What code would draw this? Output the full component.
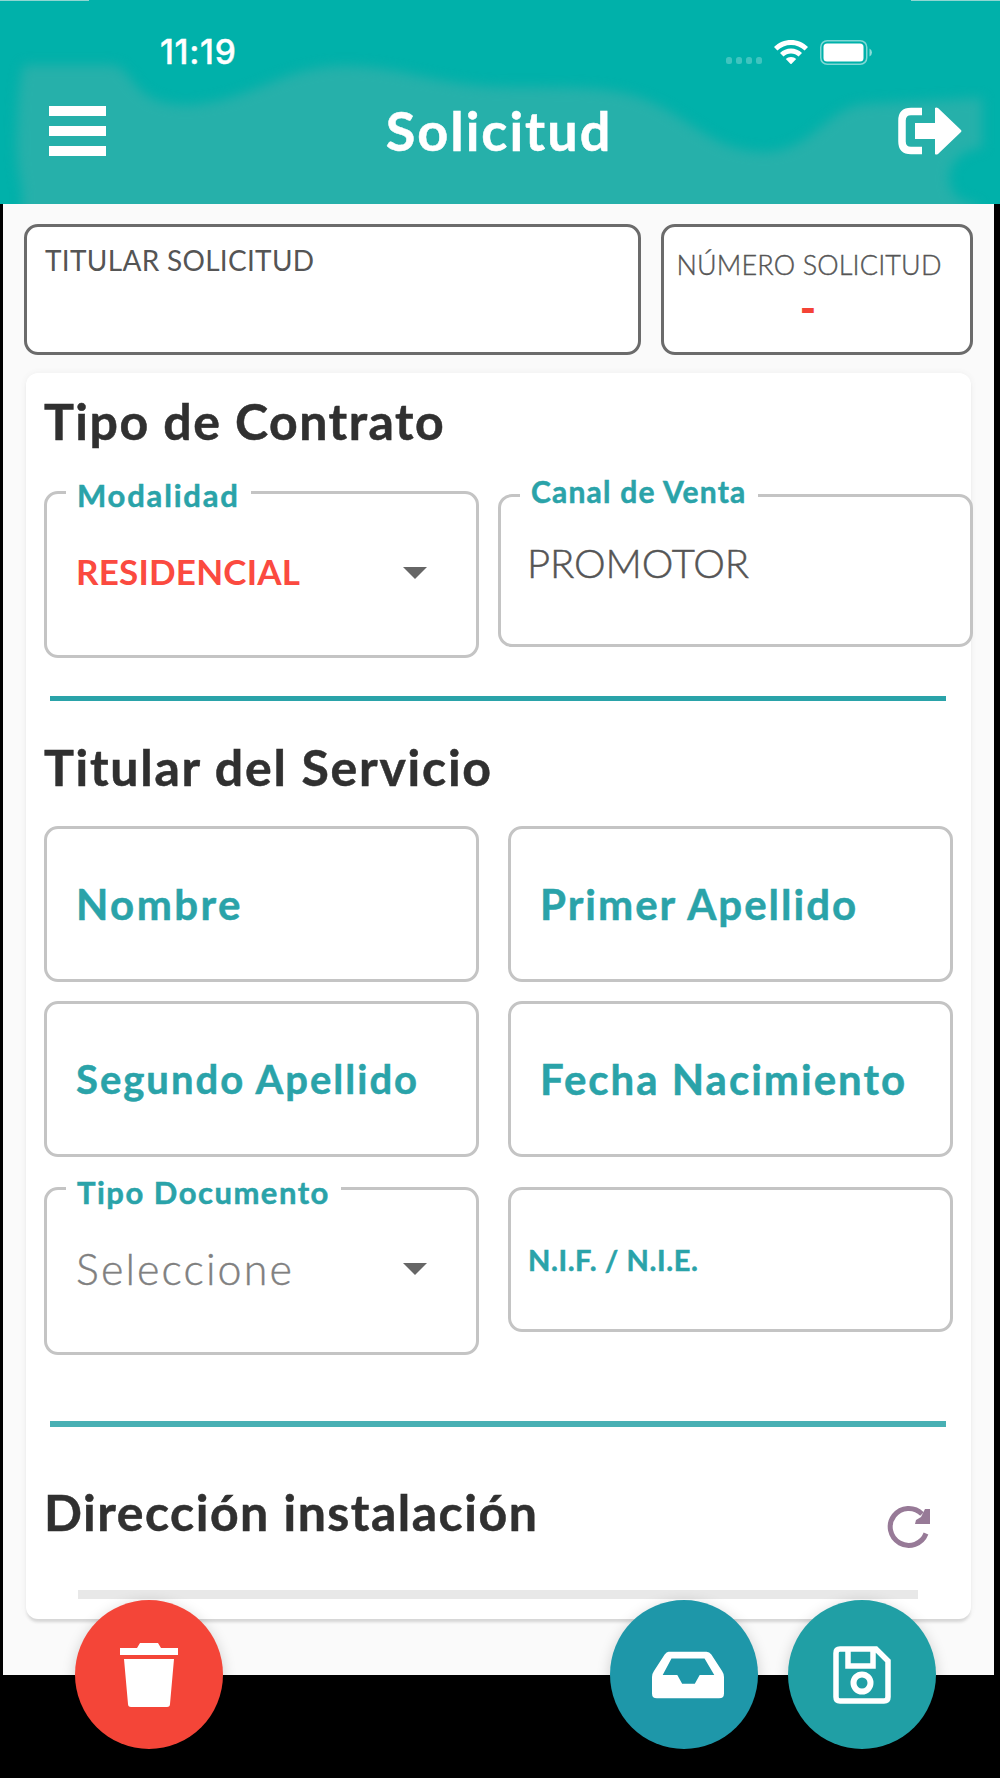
<div class="app">
  <header>
    <svg class="wash" viewBox="0 0 1000 204" aria-hidden="true">
      <path d="M22 240V190Q15 160 17 130Q18 80 24 65H112C135 68 130 104 185 105C250 103 280 66 345 66C400 66 430 84 500 87C570 88 600 86 635 96C690 114 710 152 765 152C815 150 825 108 865 104L982 98V148C942 150 936 202 978 204V240Z" />
    </svg>
    <div class="edges"><i></i><i></i></div>
    <div class="status">
      <span class="time">11:19</span>
      <div class="signals">
        <svg width="36" height="7" viewBox="0 0 36 7" class="dots"><rect width="6" height="7" rx="2.5" /><rect x="10" width="6" height="7" rx="2.5" /><rect x="20" width="6" height="7" rx="2.5" /><rect x="30" width="6" height="7" rx="2.5" /></svg>
        <svg width="34" height="24" viewBox="0 0 34 24" class="wifi"><path d="M17 0C23.500 0 29.400 2.500 34 7L30.600 10.600C27 7 22.200 5 17 5S7 7 3.400 10.600L0 7C4.600 2.500 10.500 0 17 0Z" /><path d="M17 8.500C21.200 8.500 25 10.100 28 13L24.500 16.500C22.500 14.600 19.900 13.500 17 13.500S11.500 14.600 9.500 16.500L6 13C9 10.100 12.800 8.500 17 8.500Z" /><path d="M17 17C19.200 17 20.900 17.800 22.200 19L17 24.400L11.800 19C13.100 17.800 14.800 17 17 17Z" /></svg>
        <svg width="53" height="25" viewBox="0 0 53 25"><rect x=".75" y=".75" width="46" height="23.500" rx="6.500" fill="none" stroke="#fff" stroke-opacity=".5" stroke-width="1.500" /><rect x="3.500" y="3.500" width="40" height="18" rx="3.500" fill="#fff" /><path d="M49.500 8.500Q52 10 52 12.500T49.500 16.500Z" fill="#fff" fill-opacity=".55" /></svg>
      </div>
    </div>
    <div class="bar">
      <svg class="burger" width="57" height="50" viewBox="0 0 57 50"><path d="M0 0H57V10H0ZM0 20H57V30H0ZM0 40H57V50H0Z" /></svg>
      <h1>Solicitud</h1>
      <svg width="64" height="48" viewBox="0 0 64 48"><path d="M24 4.500H13Q4 4.500 4 13.500V34.500Q4 43.500 13 43.500H24" fill="none" stroke="#fff" stroke-width="7.500" /><path d="M17 16H37V1Q38 0 40 1L63 23Q64 24 63 25L40 47Q38 48 37 47V32H17Z" fill="#fff" /></svg>
    </div>
  </header>

  <main>
    <div class="summary">
      <div class="box holder">TITULAR SOLICITUD</div>
      <div class="box request"><span>NÚMERO SOLICITUD</span><b>-</b></div>
    </div>

    <section class="card">
      <h2>Tipo de Contrato</h2>
      <div class="grid contract">
        <div class="field select"><span class="label mode">Modalidad</span><span class="value red">RESIDENCIAL</span><i class="caret low"></i></div>
        <div class="field channel"><span class="label">Canal de Venta</span><span class="value light">PROMOTOR</span></div>
      </div>
      <hr />
      <h2 class="owner">Titular del Servicio</h2>
      <div class="grid">
        <div class="field"><span class="hint name">Nombre</span></div>
        <div class="field"><span class="hint">Primer Apellido</span></div>
        <div class="field"><span class="hint surname">Segundo Apellido</span></div>
        <div class="field"><span class="hint">Fecha Nacimiento</span></div>
      </div>
      <div class="grid docs">
        <div class="field select doc"><span class="label type">Tipo Documento</span><span class="value grey">Seleccione</span><i class="caret"></i></div>
        <div class="field nif"><span class="hint tiny">N.I.F. / N.I.E.</span></div>
      </div>
      <hr class="pale" />
      <div class="address">
        <h2>Dirección instalación</h2>
        <svg class="reload" width="44" height="44" viewBox="0 0 44 44"><path d="M39 28.500A18.500 18.500 0 1 1 35 9" fill="none" stroke="#977a97" stroke-width="5" /><path d="M43 4V19H28L29 15L34 12L38 4Z" fill="#977a97" /></svg>
      </div>
      <div class="track"></div>
    </section>
  </main>

  <nav>
    <button class="fab danger" aria-label="Eliminar"><svg width="58" height="66" viewBox="0 0 58 66"><path d="M0 6H17L20 1H38L41 6H58V13H0ZM4 17H54L50 62Q50 65 47 65H11Q8 65 8 62Z" /></svg></button>
    <button class="fab blue" aria-label="Bandeja"><svg width="72" height="48" viewBox="0 0 74 48"><path fill-rule="evenodd" d="M17 0H56Q59 0 61 3L72 20Q74 23 74 26V43Q74 48 69 48H5Q0 48 0 43V26Q0 23 2 20L13 3Q15 0 17 0ZM20 7L11 24H26L31 33H44L49 24H64L54 7Z" /></svg></button>
    <button class="fab teal" aria-label="Guardar"><svg width="58" height="58" viewBox="0 0 58 58"><path d="M7 3H43L55 15V51Q55 55 51 55H7Q3 55 3 51V7Q3 3 7 3ZM15 3V20H40V3" fill="none" stroke="#fff" stroke-width="5.500" /><circle cx="29" cy="37" r="8.500" fill="none" stroke="#fff" stroke-width="6" /></svg></button>
  </nav>
</div>

<style>
  :global(body) { margin: 0; background: #000; }
  .app { position: relative; width: 1000px; height: 1778px; background: #000; overflow: hidden; font-family: Lato, 'Open Sans', sans-serif; white-space: nowrap; }

  header { position: relative; height: 204px; background: #00b1aa; overflow: hidden; color: #fff; }
  .wash { position: absolute; inset: 0; width: 1000px; height: 204px; }
  .wash path { fill: #26b0aa; filter: blur(6px); }
  .edges { position: relative; display: flex; justify-content: space-between; height: 1px; }
  .edges i { width: 89px; background: #8fd6d2; }
  .status { position: relative; box-sizing: border-box; display: flex; justify-content: space-between; align-items: center; height: 103px; padding: 0 127px 1px 160px; }
  .time { font: 500 33.5px/40px Inter, sans-serif; letter-spacing: 0.7px; -webkit-text-stroke: 0.4px #fff; }
  .signals { display: flex; align-items: center; gap: 12px; }
  .dots { fill: #fff; opacity: 0.25; margin-top: 16px; }
  .wifi { fill: #fff; }
  .bar { position: relative; display: flex; justify-content: space-between; align-items: center; height: 53px; padding: 0 38px 0 49px; }
  .burger { fill: #fff; }
  h1, h2 { margin: 0; font-weight: 700; line-height: 60px; -webkit-text-stroke: 0.5px currentColor; }
  h1 { margin-right: 6px; padding-top: 1px; font-size: 54px; letter-spacing: 2px; }
  h2 { font-size: 50px; letter-spacing: 1.5px; color: #303030; }
  .owner { letter-spacing: 1.75px; }

  main { box-sizing: border-box; height: 1471px; margin: 0 6px 0 3px; padding: 20px 20px 0 21px; background: #fafafa; }
  .summary { display: grid; grid-template-columns: 617px 312px; gap: 20px; height: 131px; }
  .box { box-sizing: border-box; border: 3px solid #6b6b6b; border-radius: 14px; background: #fff; color: #555; line-height: 34px; }
  .holder { padding: 16px 18px; font-size: 28px; letter-spacing: 0.3px; }
  .request { display: flex; flex-direction: column; align-items: center; padding: 21px 16px 0 0; font-size: 27px; font-weight: 300; letter-spacing: 0.15px; -webkit-text-stroke: 0.4px #555; }
  .request b { margin-right: 2px; color: #f44336; font-size: 44px; font-weight: 900; line-height: 51px; -webkit-text-stroke: 0; }

  .card { box-sizing: border-box; width: 945px; height: 1246px; margin: 18px 0 0 2px; padding: 18px 0 0 18px; border-radius: 12px; background: #fff; box-shadow: 0 4px 3px -1px #d6d6d6, 0 0 6px #eee; }
  .grid { display: grid; grid-template-columns: 435px 445px; grid-auto-rows: 156px; gap: 19px 29px; margin-top: 29px; }
  .contract { grid-template-columns: 435px 475px; column-gap: 19px; grid-auto-rows: 167px; margin-top: 40px; }
  .docs { grid-auto-rows: 168px; margin-top: 30px; }
  .field { position: relative; box-sizing: border-box; display: flex; align-items: center; justify-content: space-between; border: 3px solid #c4c4c4; border-radius: 14px; padding: 0 49px 0 29px; }
  .select { padding-bottom: 8px; }
  .doc { padding-bottom: 4px; }
  .channel { height: 153px; margin-top: 3px; padding: 0 0 16px 26px; }
  .nif { height: 145px; padding-left: 17px; }

  /* floating caption that interrupts the top border */
  .label { position: absolute; left: 19px; top: -25px; padding: 0 11px; background: #fff; color: #2aa3a9; font-size: 30px; font-weight: 700; letter-spacing: 1.2px; line-height: 38px; -webkit-text-stroke: 0.5px currentColor; }
  .mode { top: -18px; font-size: 31px; letter-spacing: 1.8px; }
  .type { top: -17px; font-size: 31px; letter-spacing: 1.5px; }
  .value { font-size: 35px; line-height: 42px; letter-spacing: 0.2px; }
  .red { color: #fb4a40; font-weight: 700; }
  .light { font-size: 40px; font-weight: 300; letter-spacing: -0.1px; color: #555; -webkit-text-stroke: 0.5px #555; }
  .grey { font-size: 43px; font-weight: 300; letter-spacing: 2.1px; color: #808080; -webkit-text-stroke: 0.4px #808080; }
  .caret { border: 12px solid transparent; border-top-color: #666; border-bottom: 0; }
  .low { margin-top: 4px; }
  .hint { color: #2aa3a9; font-size: 42px; font-weight: 700; letter-spacing: 2px; -webkit-text-stroke: 0.5px currentColor; }
  .name { letter-spacing: 2.4px; }
  .surname { font-size: 40px; }
  .tiny { font-size: 29px; letter-spacing: 0.6px; }

  hr { width: 896px; height: 5px; margin: 38px 0 36px 6px; border: 0; background: #2aa3a9; }
  .pale { height: 6px; margin: 66px 0 55px 6px; background: #48b0b4; }
  .address { display: flex; justify-content: space-between; width: 887px; height: 60px; }
  .reload { margin-top: 23px; }
  .track { width: 840px; height: 9px; margin: 48px 0 0 34px; background: #e8e8e8; }

  nav { position: absolute; top: 1600px; left: 75px; display: flex; }
  .fab { width: 148px; height: 149px; padding: 0; border: 0; border-radius: 50%; display: grid; place-items: center; box-shadow: 0 3px 14px rgb(0 0 0 / 0.18); }
  .fab svg { fill: #fff; }
  .danger { background: #f44538; }
  .blue { background: #1e97a9; margin-left: 387px; padding-left: 7px; }
  .teal { background: #209fa5; margin-left: 30px; }
</style>
